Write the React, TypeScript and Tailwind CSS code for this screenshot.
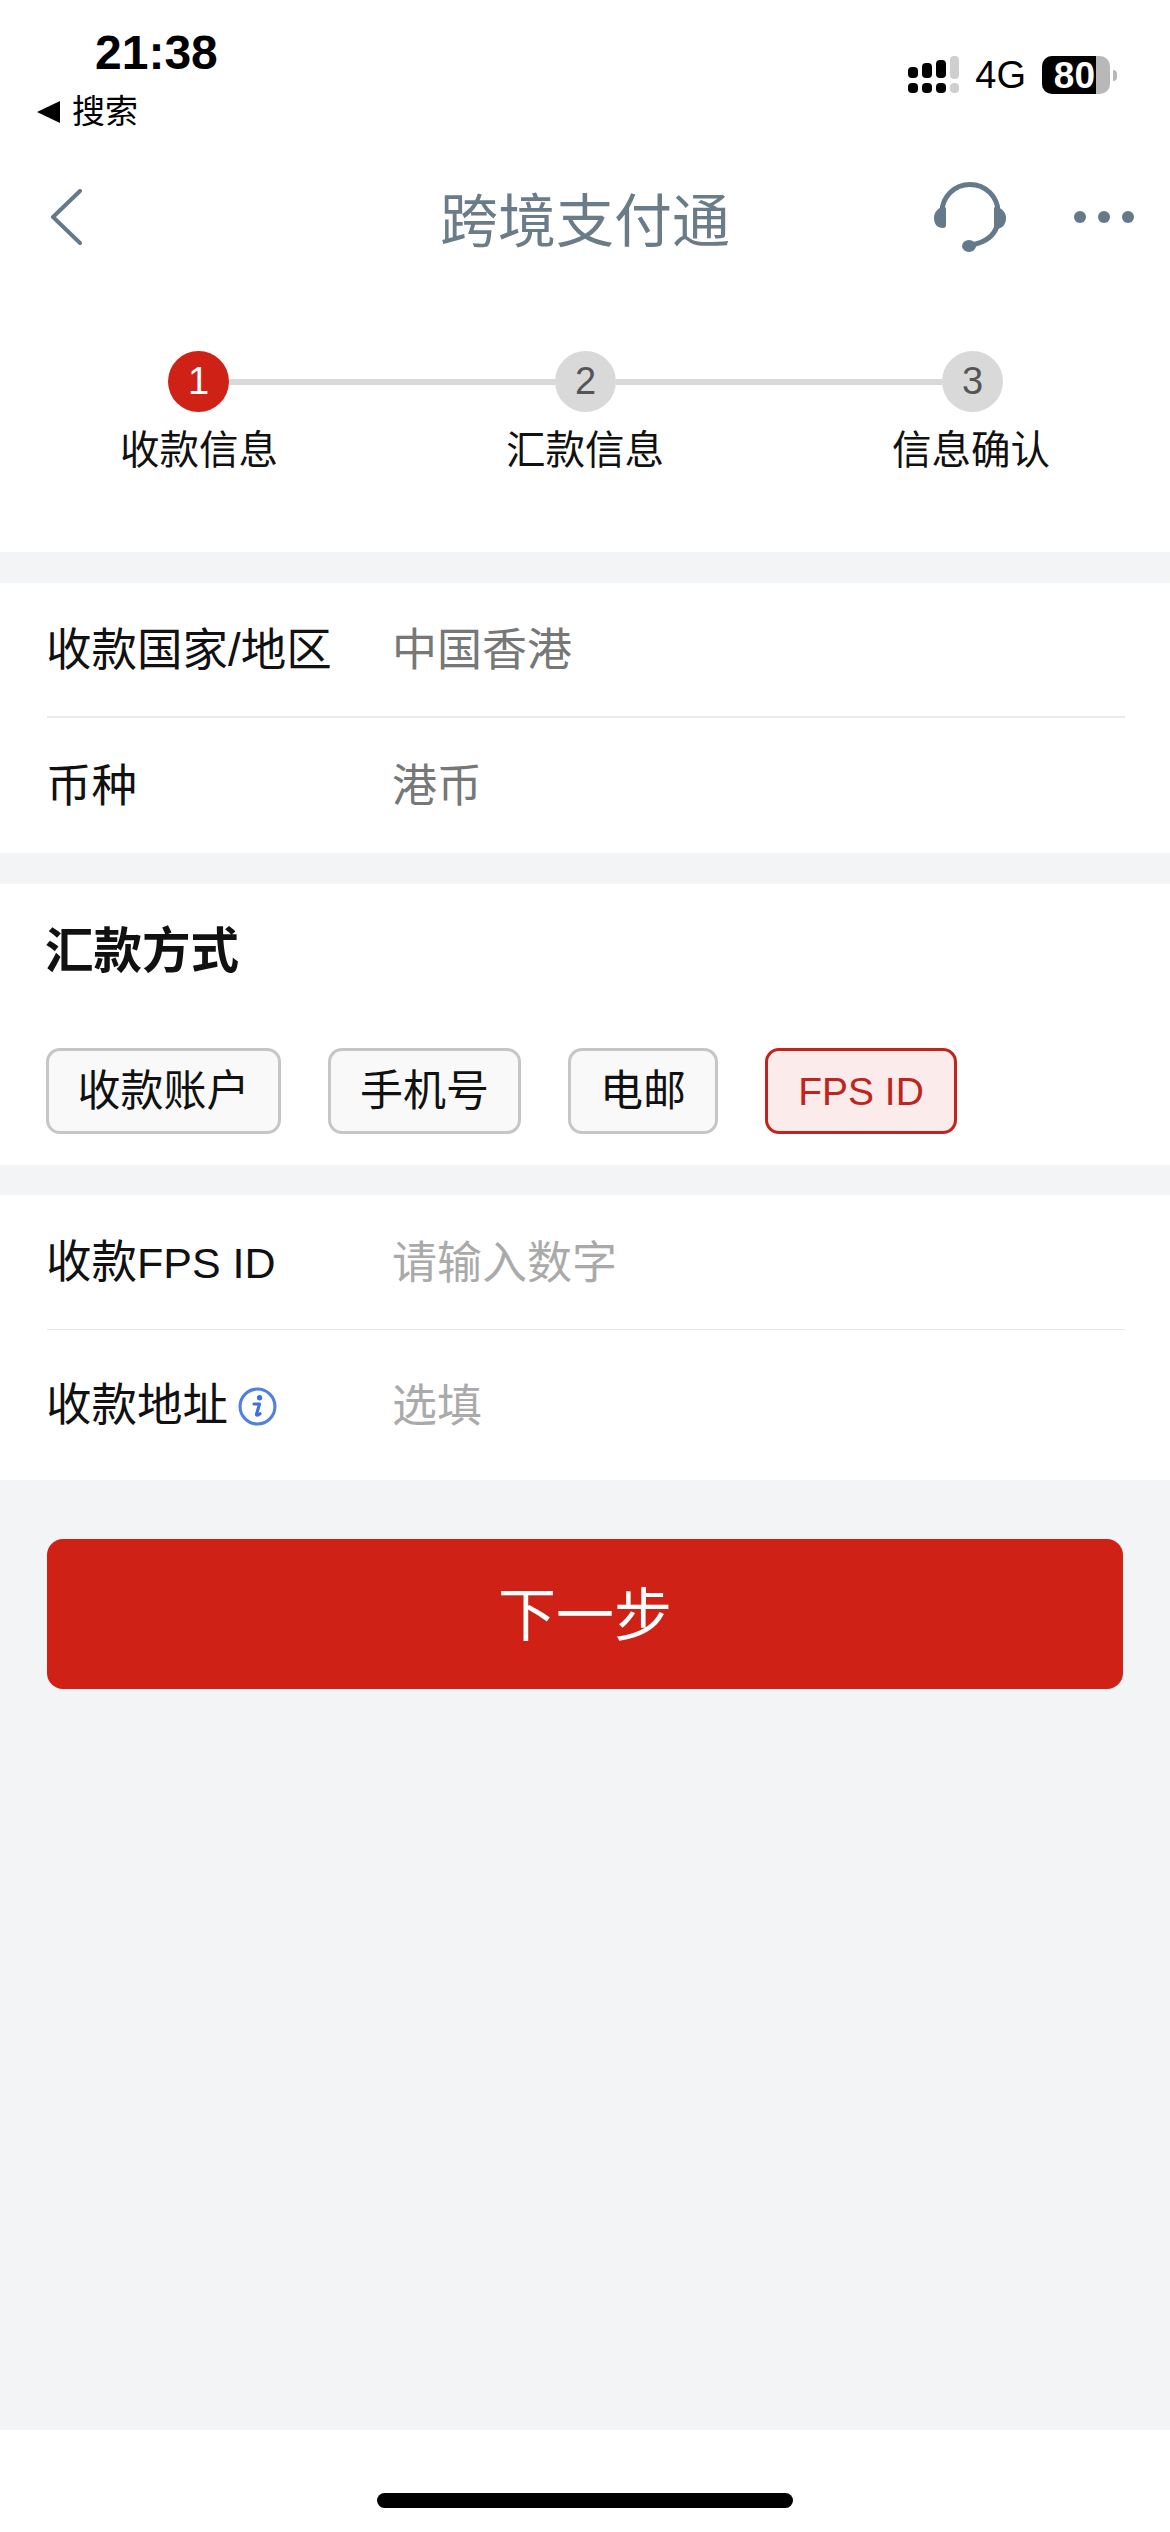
import React from 'react';

const steps = ['收款信息', '汇款信息', '信息确认'];

const methods = [
    { name: '收款账户', width: 'w-[235px]', active: false },
    { name: '手机号', width: 'w-[193px]', active: false },
    { name: '电邮', width: 'w-[150px]', active: false },
    { name: 'FPS ID', width: 'w-[192px]', active: true },
];

const SignalIcon = () => (
    <svg width="51" height="38" viewBox="0 0 51 38" className="block">
        <rect x="0" y="11" width="10" height="11" rx="4" fill="#000" />
        <rect x="14" y="7" width="10" height="15" rx="4" fill="#000" />
        <rect x="28" y="4" width="10" height="18" rx="4" fill="#000" />
        <rect x="42" y="0" width="9" height="23" rx="4" fill="#cfcfcf" />
        <rect x="0" y="27" width="10" height="10" rx="4" fill="#000" />
        <rect x="14" y="27" width="10" height="10" rx="4" fill="#000" />
        <rect x="28" y="27" width="10" height="10" rx="4" fill="#000" />
        <rect x="42" y="27" width="9" height="10" rx="4" fill="#cfcfcf" />
    </svg>
);

const HeadsetIcon = () => (
    <svg width="72" height="70" viewBox="0 0 72 70" className="block" fill="none">
        <path d="M8 30A28 27.5 0 0 1 64 30" stroke="#64798a" strokeWidth="5" />
        <path d="M63 44C60 54 52 60 38 63" stroke="#64798a" strokeWidth="5" strokeLinecap="round" />
        <path d="M8 25C3 27 0 31 0 36C0 42 3 46 9 46C11 46 12 45 12 43V27C12 25 10 24 8 25Z" fill="#64798a" />
        <path d="M63 25C69 27 72 31 72 36C72 42 69 46 63 47C61 47 60 46 60 44V27C60 25 61 24 63 25Z" fill="#64798a" />
        <ellipse cx="35" cy="64" rx="7" ry="6" fill="#64798a" />
    </svg>
);

const InfoIcon = () => (
    <svg width="39" height="39" viewBox="0 0 38 38" className="block" fill="none">
        <circle cx="19" cy="19" r="17" stroke="#4f7fe0" strokeWidth="3" />
        <circle cx="21" cy="10.5" r="2.6" fill="#3f6fd8" />
        <path d="M15.5 16.5H21L18 26.5C17.7 27.8 19 28 21.5 26" stroke="#3f6fd8" strokeWidth="3" strokeLinecap="round" strokeLinejoin="round" />
    </svg>
);

const Row = ({ label, value, color, icon }: { label: React.ReactNode; value: string; color: string; icon?: boolean }) => (
    <div className="flex h-full items-center pt-[2px]">
        <div className="-ml-[1px] flex w-[346px] items-center gap-[10px] text-[45.5px] leading-none text-[#111]">
            <span>{label}</span>
            {icon && <InfoIcon />}
        </div>
        <span className={`text-[45px] leading-none ${color}`}>{value}</span>
    </div>
);

export default function App() {
    return (
        <div className="flex min-h-[2532px] w-[1170px] flex-col bg-[#f3f4f6] font-['Liberation_Sans','Noto_Sans_CJK_SC',sans-serif] text-[#111]">
            {/* Status bar + nav + stepper */}
            <div className="h-[552px] bg-white">
                <div className="flex h-[180px] justify-between">
                    <div className="pl-[37px] pt-[30px]">
                        <div className="pl-[58px] text-[48px] font-bold leading-[46px] text-black">21:38</div>
                        <div className="mt-[19px] flex items-center gap-[12px] text-[33px] leading-[33px] text-black">
                            <span className="h-0 w-0 border-y-[11px] border-r-[23px] border-y-transparent border-r-black" />
                            搜索
                        </div>
                    </div>
                    <div className="mt-[56px] flex h-[38px] items-center pr-[53px]">
                        <SignalIcon />
                        <span className="ml-[16px] text-[38px] leading-none text-black">4G</span>
                        <div className="relative ml-[16px] flex h-[38px] w-[68px] overflow-hidden rounded-[10px] bg-[#b8b8b8]">
                            <div className="flex h-full w-[54px] items-center justify-end bg-black pr-[1px] text-[37px] font-bold leading-none text-white">80</div>
                        </div>
                        <span className="ml-[3px] h-[11px] w-[4px] rounded-r-full bg-[#b8b8b8]" />
                    </div>
                </div>

                <div className="flex h-[82px] items-center justify-between pl-[50px] pr-[36px]">
                    <svg width="32" height="56" viewBox="0 0 32 56" fill="none" className="-mt-[8px] block">
                        <path d="M30 2L3 28L30 54" stroke="#64798a" strokeWidth="4" strokeLinecap="round" strokeLinejoin="round" />
                    </svg>
                    <span className="ml-[358px] pt-[2px] text-[58px] leading-none text-[#6b7c89]">跨境支付通</span>
                    <div className="-mt-[8px] ml-auto flex items-center gap-[68px]">
                        <HeadsetIcon />
                        <div className="flex gap-[12px]">
                            <span className="size-[12px] rounded-full bg-[#64798a]" />
                            <span className="size-[12px] rounded-full bg-[#64798a]" />
                            <span className="size-[12px] rounded-full bg-[#64798a]" />
                        </div>
                    </div>
                </div>

                <div className="ml-[168px] mt-[89px] flex w-[835px] items-center">
                    <div className="flex size-[61px] items-center justify-center rounded-full bg-[#cf2116] text-[38px] text-white">1</div>
                    <div className="h-[6px] flex-1 bg-[#d9d9d9]" />
                    <div className="flex size-[61px] items-center justify-center rounded-full bg-[#d9d9d9] text-[38px] text-[#555]">2</div>
                    <div className="h-[6px] flex-1 bg-[#d9d9d9]" />
                    <div className="flex size-[61px] items-center justify-center rounded-full bg-[#d9d9d9] text-[38px] text-[#555]">3</div>
                </div>
                <div className="ml-[6px] mt-[16px] grid w-[1158px] grid-cols-3">
                    {steps.map((step) => (
                        <div key={step} className="text-center text-[39.5px] leading-[44px] text-[#111]">{step}</div>
                    ))}
                </div>
            </div>

            {/* Country and currency */}
            <div className="mt-[31px] bg-white pl-[47px] pr-[45px]">
                <div className="h-[133px]"><Row label="收款国家/地区" value="中国香港" color="text-[#777]" /></div>
                <div className="h-[2px] bg-[#ebebeb]" />
                <div className="h-[135px]"><Row label="币种" value="港币" color="text-[#777]" /></div>
            </div>

            {/* Remittance method */}
            <div className="mt-[31px] h-[281px] bg-white px-[46px]">
                <div className="-ml-[1px] pt-[43px] text-[48.5px] font-bold leading-[48px] text-[#111]">汇款方式</div>
                <div className="mt-[73px] flex gap-[47px]">
                    {methods.map((m) => (
                        <div
                            key={m.name}
                            className={`flex h-[86px] items-center justify-center rounded-[14px] border-[3px] leading-none ${m.width} ${
                                m.active
                                    ? 'border-[#c0241c] bg-[#fbeceb] text-[39px] text-[#c0241c]'
                                    : 'border-[#c6c6c6] bg-[#f9f9f9] text-[43px] text-[#111]'
                            }`}
                        >
                            {m.name}
                        </div>
                    ))}
                </div>
            </div>

            {/* FPS details */}
            <div className="mt-[30px] bg-white pl-[47px] pr-[45px]">
                <div className="h-[134px]">
                    <Row label={<>收款<span className="text-[43px]">FPS ID</span></>} value="请输入数字" color="text-[#aaa]" />
                </div>
                <div className="h-[1px] bg-[#e6e6e6]" />
                <div className="h-[150px]"><Row label="收款地址" value="选填" color="text-[#aaa]" icon /></div>
            </div>

            <div className="mx-[47px] mt-[59px] flex h-[150px] items-center justify-center rounded-[16px] bg-[#cf2116] pt-[4px] text-[58px] leading-none text-white">
                下一步
            </div>

            <div className="flex-1" />

            {/* Home indicator */}
            <div className="flex h-[102px] justify-center bg-white pt-[63px]">
                <div className="h-[15px] w-[416px] rounded-full bg-black" />
            </div>
        </div>
    );
}
